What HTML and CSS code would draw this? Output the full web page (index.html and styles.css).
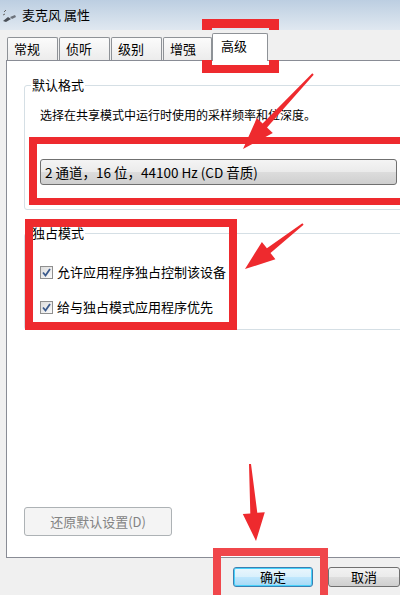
FILE: index.html
```html
<!DOCTYPE html>
<html lang="zh-CN">
<head>
<meta charset="utf-8">
<title>麦克风 属性</title>
<link rel="stylesheet" href="styles.css">
</head>
<body>
<div class="window">
  <div class="titlebar">
    <svg class="ticon" width="16" height="16" viewBox="0 0 16 16">
      <path d="M1 13 L6 9 L9 11 L4 14 Z" fill="#4a4f57"/>
      <path d="M8 9 L13 7 L14 9 L10 11 Z" fill="#6c727b"/>
      <path d="M2 4 L4 2 M1 7 L3 6" stroke="#666" stroke-width="1"/>
    </svg>
    <span class="title">麦克风 属性</span>
  </div>
  <div class="tabs">
    <div class="tab">常规</div>
    <div class="tab">侦听</div>
    <div class="tab">级别</div>
    <div class="tab narrow">增强</div>
    <div class="tab active">高级</div>
  </div>
  <div class="panel">
    <fieldset class="group g1">
      <legend>默认格式</legend>
      <p class="desc">选择在共享模式中运行时使用的采样频率和位深度。</p>
      <div class="combo">2 通道，16 位，44100 Hz (CD 音质)</div>
    </fieldset>
    <fieldset class="group g2">
      <legend>独占模式</legend>
      <label class="check first"><span class="box"><svg width="11" height="11" viewBox="0 0 11 11"><path d="M2 5.5 L4.5 8.5 L9 2" fill="none" stroke="#3b5a8c" stroke-width="1.8"/></svg></span>允许应用程序独占控制该设备</label>
      <label class="check"><span class="box"><svg width="11" height="11" viewBox="0 0 11 11"><path d="M2 5.5 L4.5 8.5 L9 2" fill="none" stroke="#3b5a8c" stroke-width="1.8"/></svg></span>给与独占模式应用程序优先</label>
    </fieldset>
    <button class="btn restore" disabled>还原默认设置(D)</button>
  </div>
  <div class="footer">
    <button class="btn ok">确定</button>
    <button class="btn cancel">取消</button>
  </div>
</div>

<div class="mark mark-tab"></div>
<div class="mark mark-combo"></div>
<div class="mark mark-excl"></div>
<div class="mark mark-ok"></div>

<svg class="arrows" width="400" height="595" viewBox="0 0 400 595">
  <polygon fill="#ee2a2e" points="312.3,73.3 262.6,123.5 256.8,118.1 243,149 272.8,133.1 267,127.6 313.7,74.7"/>
  <polygon fill="#ee2a2e" points="302.4,223.2 266.9,248.2 261.9,241.9 245,269 275.4,259.3 270.5,253 303.6,224.8"/>
  <polygon fill="#ee2a2e" points="249,464.1 250.3,513.4 242.8,514 256,541 264.8,512.2 257.3,512.8 251,463.9"/>
</svg>
</body>
</html>
```

FILE: styles.css
```css
html, body {
  margin: 0;
  padding: 0;
}
body {
  width: 400px;
  height: 595px;
  overflow: hidden;
  position: relative;
  background: #f0f0f0;
  font-family: "Noto Sans CJK SC", "Noto Sans", sans-serif;
  color: #000;
}
.window {
  display: flex;
  flex-direction: column;
  width: 400px;
  height: 595px;
  overflow: hidden;
}
.titlebar {
  flex: none;
  height: 30px;
  display: flex;
  align-items: center;
  background: linear-gradient(to bottom, #bccee1 0%, #ccdae8 45%, #e0e8f0 100%);
}
.ticon {
  margin-left: 2px;
  margin-top: 2px;
}
.title {
  margin-left: 4px;
  font-size: 13px;
  line-height: 16px;
}
.tabs {
  flex: none;
  height: 30px;
  display: flex;
  align-items: flex-end;
  padding-left: 7px;
  gap: 1px;
  background: #f0f0f0;
  position: relative;
  z-index: 1;
}
.tab {
  box-sizing: border-box;
  width: 51px;
  height: 23px;
  padding-left: 6px;
  font-size: 13px;
  line-height: 21px;
  border: 1px solid #8e9297;
  border-bottom: none;
  border-radius: 2px 2px 0 0;
  background: linear-gradient(to bottom, #fbfbfb, #ececec);
}
.tab.narrow {
  width: 49px;
}
.tab.active {
  width: 56px;
  height: 28px;
  margin-left: -1px;
  margin-bottom: -1px;
  padding-left: 8px;
  line-height: 24px;
  background: #fff;
}
.panel {
  flex: none;
  box-sizing: border-box;
  width: 420px;
  height: 498px;
  margin-left: 6px;
  background: #fff;
  border: 1px solid #898c95;
  display: flex;
  flex-direction: column;
  align-items: flex-start;
}
.group {
  box-sizing: border-box;
  width: 400px;
  margin: 16px 0 0 17px;
  padding: 0;
  border: 1px solid #d5dfe5;
  border-radius: 3px;
  min-width: 0;
}
.group legend {
  margin-left: 6px;
  padding: 0 1px;
  font-size: 13px;
  line-height: 16px;
}
.desc {
  margin: 14px 0 0 15px;
  font-size: 12px;
  line-height: 16px;
}
.combo {
  box-sizing: border-box;
  width: 357px;
  height: 26px;
  margin: 36px 0 24px 15px;
  padding-left: 4px;
  font-size: 13.5px;
  line-height: 24px;
  border: 1px solid #707070;
  border-radius: 3px;
  background: linear-gradient(to bottom, #f4f4f4 0%, #ebebeb 48%, #dcdcdc 52%, #cfcfcf 100%);
}
.g2 {
  margin-top: 15px;
  padding-bottom: 13px;
}
.check {
  display: flex;
  align-items: center;
  height: 18px;
  margin: 17px 0 0 15px;
  font-size: 13px;
  line-height: 18px;
}
.check.first {
  margin-top: 22px;
}
.box {
  box-sizing: border-box;
  width: 13px;
  height: 13px;
  margin-right: 4px;
  border: 1px solid #8f8f8f;
  background: linear-gradient(135deg, #dcdcdc, #fbfbfb);
  display: flex;
  align-items: center;
  justify-content: center;
}
.btn {
  box-sizing: border-box;
  font-family: "Noto Sans CJK SC", "Noto Sans", sans-serif;
  font-size: 13px;
  padding: 0;
  border-radius: 3px;
  border: 1px solid #707070;
  background: linear-gradient(to bottom, #f2f2f2 0%, #ebebeb 48%, #dddddd 52%, #cfcfcf 100%);
  color: #000;
}
.restore {
  width: 148px;
  height: 29px;
  margin: 177px 0 0 17px;
  border-color: #adb2b5;
  background: #f4f4f4;
  color: #838383;
}
.footer {
  flex: none;
  display: flex;
  padding: 9px 0 0 233px;
  gap: 15px;
}
.ok {
  flex: none;
  width: 80px;
  height: 20px;
  line-height: 16px;
  border-color: #3c7fb1;
  box-shadow: inset 0 0 0 1px #48d2fb;
  background: linear-gradient(to bottom, #eaf6fd 0%, #d9f0fc 48%, #bee6fd 52%, #a7d9f5 100%);
}
.cancel {
  flex: none;
  width: 72px;
  height: 20px;
  line-height: 16px;
}
.mark {
  position: absolute;
  box-sizing: border-box;
  border: 9px solid #ee2a2e;
}
.mark-tab {
  left: 202px;
  top: 19px;
  width: 77px;
  height: 54px;
  border-width: 9px 10px 8px 10px;
}
.mark-combo {
  left: 29px;
  top: 137px;
  width: 371px;
  height: 68px;
  border-width: 7px 0 7px 8px;
}
.mark-excl {
  left: 25px;
  top: 219px;
  width: 212px;
  height: 111px;
  border-width: 8px;
}
.mark-ok {
  left: 213px;
  top: 548px;
  width: 115px;
  height: 47px;
  border-width: 8px 8px 0 8px;
  border-color: #f0474b;
}
.arrows {
  position: absolute;
  left: 0;
  top: 0;
  pointer-events: none;
}
```
